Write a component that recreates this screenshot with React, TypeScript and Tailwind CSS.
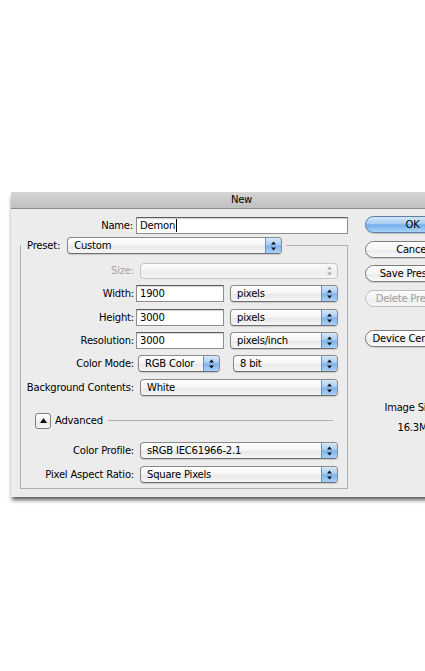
import React from "react";

const Arrows = ({ disabled }: { disabled?: boolean }) => (
  <svg width="7" height="10" viewBox="0 0 7 10">
    <path d="M3.5 0.5 L6 3.5 L1 3.5 Z" fill={disabled ? "#a8a8a8" : "#111"} />
    <path d="M3.5 9.5 L6 6.5 L1 6.5 Z" fill={disabled ? "#a8a8a8" : "#111"} />
  </svg>
);

const Select = ({
  value,
  className,
  disabled,
}: {
  value?: string;
  className: string;
  disabled?: boolean;
}) =>
  disabled ? (
    <div
      className={
        "flex h-[16px] items-stretch rounded-[4px] border border-[#c4c4c4] bg-[linear-gradient(to_bottom,#fafafa_0%,#f2f2f2_50%,#ececec_51%,#f4f4f4_100%)] " +
        className
      }
    >
      <div className="flex-1" />
      <div className="flex w-[16px] items-center justify-center">
        <Arrows disabled />
      </div>
    </div>
  ) : (
    <div
      className={
        "flex h-[17px] items-stretch overflow-hidden rounded-[4px] border border-[#8a8a8a] border-b-[#6f6f6f] bg-[linear-gradient(to_bottom,#ffffff_0%,#f4f4f4_50%,#e7e7e7_51%,#f7f7f7_100%)] shadow-[0_1px_1px_rgba(0,0,0,0.15)] " +
        className
      }
    >
      <div className="flex flex-1 items-center pl-[6px] leading-[15px]">{value}</div>
      <div className="flex w-[16px] items-center justify-center border-l border-[#6d8fb8] bg-[linear-gradient(to_bottom,#d6e8fa_0%,#a9cdf3_45%,#7fb3ea_52%,#a6d2fb_100%)]">
        <Arrows />
      </div>
    </div>
  );

const Input = ({ value, className, caret }: { value: string; className: string; caret?: boolean }) => (
  <div
    className={
      "flex h-[17px] items-center border border-[#8e8e8e] border-t-[#5e5e5e] bg-white pl-[3px] leading-[15px] shadow-[inset_0_1px_1px_rgba(0,0,0,0.18)] " +
      className
    }
  >
    {value}
    {caret && <span className="ml-[1px] inline-block h-[13px] w-px bg-black" />}
  </div>
);

const Button = ({
  label,
  className = "",
  primary,
  disabled,
}: {
  label: string;
  className?: string;
  primary?: boolean;
  disabled?: boolean;
}) => (
  <div
    className={
      "flex h-[17px] w-[95px] items-center justify-center whitespace-nowrap rounded-full leading-[15px] " +
      (primary
        ? "border border-[#5b7fa9] bg-[linear-gradient(to_bottom,#d3e7fb_0%,#a6cdf3_45%,#72adea_52%,#a9d6fd_100%)] shadow-[0_1px_1px_rgba(0,0,0,0.2)] "
        : disabled
        ? "border border-[#bdbdbd] bg-[linear-gradient(to_bottom,#fbfbfb_0%,#f3f3f3_50%,#ececec_51%,#f7f7f7_100%)] text-[#9e9e9e] "
        : "border border-[#7c7c7c] bg-[linear-gradient(to_bottom,#ffffff_0%,#f5f5f5_50%,#e8e8e8_51%,#fafafa_100%)] shadow-[0_1px_1px_rgba(0,0,0,0.15)] ") +
      className
    }
  >
    {label}
  </div>
);

const Label = ({ children, w, muted }: { children: React.ReactNode; w: string; muted?: boolean }) => (
  <div className={"shrink-0 text-right leading-[15px] " + w + (muted ? " text-[#a3a3a3]" : "")}>{children}</div>
);

export default function App() {
  return (
    <div className="h-[671px] w-[425px] overflow-hidden bg-white pt-[192px] font-['DejaVu_Sans',sans-serif] text-[10px] tracking-[-0.2px] text-black">
      <div className="ml-[11px] w-[461px] bg-[#ececec] shadow-[0_4px_4px_-1px_rgba(0,0,0,0.65)]">
        <div className="flex h-[17px] items-center justify-center border-b border-[#8c8c8c] bg-[linear-gradient(to_bottom,#d6d6d6_0%,#bfbfbf_100%)] leading-[16px]">
          New
        </div>
        <div className="flex pb-[8px]">
          <div className="w-[340px] shrink-0 pt-[8px]">
            <div className="flex items-center">
              <Label w="w-[122px]">Name:</Label>
              <Input value="Demon" caret className="ml-[3px] w-[212px]" />
            </div>
            <fieldset className="ml-[9px] mt-[3px] w-[328px] border border-[#b2b2b2] pb-[5px]">
              <legend className="pl-[6px] pr-[4px]">
                <div className="flex items-center">
                  <span className="leading-[15px]">Preset:</span>
                  <Select value="Custom" className="ml-[7px] w-[215px]" />
                </div>
              </legend>
              <div className="mt-[8px] flex h-[17px] items-center">
                <Label w="w-[113px]" muted>
                  Size:
                </Label>
                <Select disabled className="ml-[6px] w-[198px]" />
              </div>
              <div className="mt-[6px] flex h-[17px] items-center">
                <Label w="w-[113px]">Width:</Label>
                <Input value="1900" className="ml-[2px] w-[88px]" />
                <Select value="pixels" className="ml-[6px] w-[108px]" />
              </div>
              <div className="mt-[7px] flex h-[17px] items-center">
                <Label w="w-[113px]">Height:</Label>
                <Input value="3000" className="ml-[2px] w-[88px]" />
                <Select value="pixels" className="ml-[6px] w-[108px]" />
              </div>
              <div className="mt-[6px] flex h-[17px] items-center">
                <Label w="w-[113px]">Resolution:</Label>
                <Input value="3000" className="ml-[2px] w-[88px]" />
                <Select value="pixels/inch" className="ml-[6px] w-[108px]" />
              </div>
              <div className="mt-[6px] flex h-[17px] items-center">
                <Label w="w-[113px]">Color Mode:</Label>
                <Select value="RGB Color" className="ml-[4px] w-[82px]" />
                <Select value="8 bit" className="ml-[13px] w-[105px]" />
              </div>
              <div className="mt-[7px] flex h-[17px] items-center">
                <Label w="w-[113px]">Background Contents:</Label>
                <Select value="White" className="ml-[6px] w-[198px]" />
              </div>
              <div className="mt-[16px] flex h-[17px] items-center">
                <div className="ml-[14px] flex h-[16px] w-[16px] items-center justify-center rounded-[3px] border border-[#7e7e7e] bg-[linear-gradient(to_bottom,#ffffff_0%,#f2f2f2_50%,#e6e6e6_51%,#f8f8f8_100%)]">
                  <svg width="7" height="5" viewBox="0 0 7 5">
                    <path d="M3.5 0 L7 5 L0 5 Z" fill="#111" />
                  </svg>
                </div>
                <span className="ml-[4px] leading-[15px]">Advanced</span>
                <div className="ml-[5px] mr-[14px] h-px flex-1 bg-[#b2b2b2]" />
              </div>
              <div className="mt-[13px] flex h-[17px] items-center">
                <Label w="w-[113px]">Color Profile:</Label>
                <Select value="sRGB IEC61966-2.1" className="ml-[6px] w-[198px]" />
              </div>
              <div className="mt-[7px] flex h-[17px] items-center">
                <Label w="w-[113px]">Pixel Aspect Ratio:</Label>
                <Select value="Square Pixels" className="ml-[6px] w-[198px]" />
              </div>
            </fieldset>
          </div>
          <div className="ml-[14px] flex w-[95px] shrink-0 flex-col pt-[7px]">
            <Button label="OK" primary />
            <Button label="Cancel" className="mt-[8px]" />
            <Button label="Save Preset..." className="mt-[7px]" />
            <Button label="Delete Preset..." disabled className="mt-[8px]" />
            <Button label="Device Central..." className="mt-[23px]" />
            <div className="mt-[55px] text-center leading-[12px]">Image Size:</div>
            <div className="mt-[8px] text-center leading-[12px]">16.3M</div>
          </div>
        </div>
      </div>
    </div>
  );
}
